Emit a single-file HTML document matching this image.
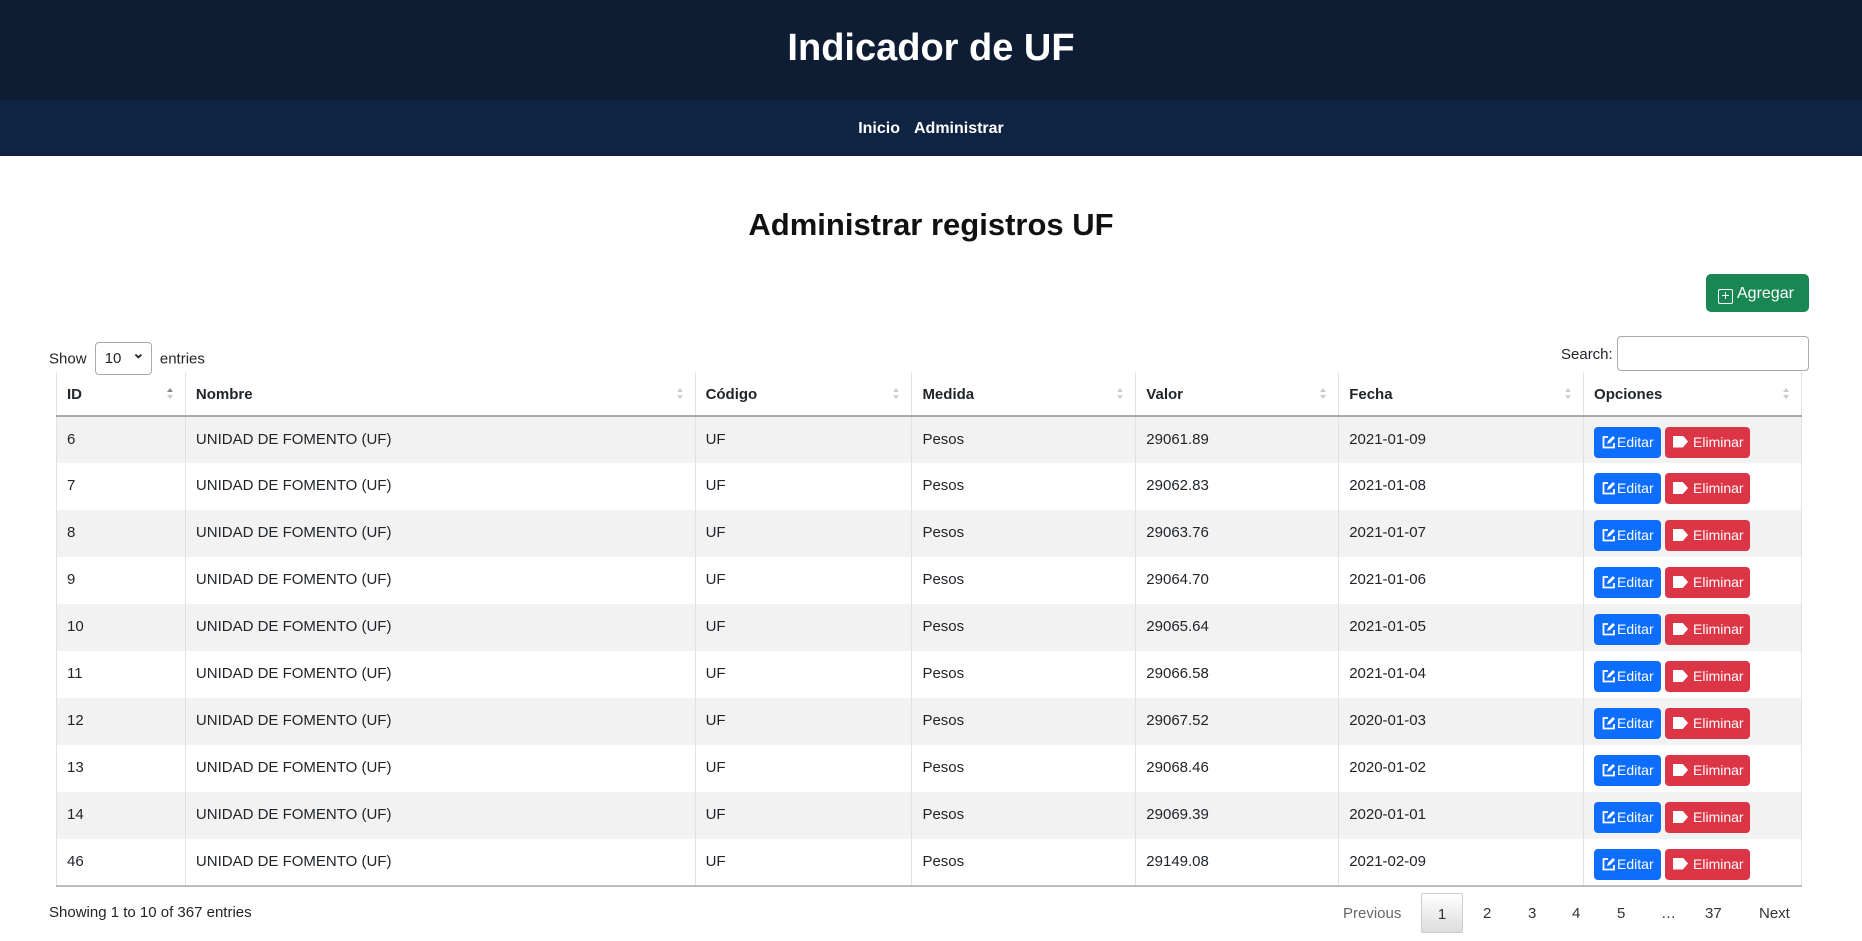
<!DOCTYPE html>
<html><head><meta charset="utf-8"><style>
*{box-sizing:border-box;margin:0;padding:0}
body{width:1862px;height:941px;overflow:hidden;background:#fff;font-family:"Liberation Sans",sans-serif;color:#212529;font-size:15px;position:relative}
.hdr{position:absolute;left:0;top:0;width:1862px;height:100px;background:#0e1c34;color:#fff;text-align:center;font-size:38px;line-height:96px;font-weight:bold}
.nav{position:absolute;left:0;top:100px;width:1862px;height:56px;background:#0f2342;color:#fff;text-align:center;font-weight:bold;font-size:16px;line-height:58px}
.nav span{margin:0 7px}
h2{position:absolute;top:203px;width:1862px;text-align:center;font-size:31px;font-weight:bold;line-height:44px;color:#111}
.add{position:absolute;left:1706px;top:274px;width:103px;height:38px;background:#198754;border-radius:5px;color:#fff;font-size:16px;line-height:40px;padding-left:12px}
.add i{display:inline-block;width:15px;height:15px;border:1.5px solid #fff;border-radius:2px;vertical-align:-2px;margin-right:4px;font-style:normal;font-size:14px;line-height:11px;text-align:center}
.show{position:absolute;left:49px;top:343px;line-height:20px}
.sel{display:inline-block;width:57px;height:33px;border:1px solid #aaa;border-radius:4px;vertical-align:middle;margin:0 4px;padding-left:9px;line-height:31px;position:relative;top:-1px}
.sel:after{content:"⌄";position:absolute;right:6px;top:-5px;font-weight:bold}
.search{position:absolute;left:1561px;top:346px}
.sinp{position:absolute;left:1617px;top:336px;width:192px;height:35px;border:1px solid #aaa;border-radius:4px}
table{position:absolute;left:56px;top:372px;width:1746px;border-collapse:collapse}
th{height:44px;text-align:left;padding-left:10px;padding-top:2px;font-weight:bold;border-bottom:2px solid #aaa;border-left:1px solid #dee2e6;position:relative}
th:after{content:"";position:absolute;right:12px;top:16px;border:3px solid transparent;border-bottom:4px solid #ccc;border-top:0}
th:before{content:"";position:absolute;right:12px;top:23px;border:3px solid transparent;border-top:4px solid #ccc;border-bottom:0}
th.s:after{border-bottom-color:#888}
td{height:47px;padding-left:10px;padding-bottom:2px;border-left:1px solid #dee2e6;vertical-align:middle}
tr:nth-child(odd) td{background:#f2f2f2}
th:last-child,td:last-child{border-right:1px solid #dee2e6}
tbody tr:last-child td{border-bottom:2px solid #bbb}
.b{display:inline-block;height:31px;line-height:31px;color:#fff;border-radius:4px;font-size:14px;vertical-align:middle;position:relative;top:3px}
.e{background:#0d6efd;width:67px;padding-left:8px}
.d{background:#dc3545;width:85px;padding-left:8px;margin-left:4px}
.e svg{vertical-align:-2px;margin-right:1px}
.d i{display:inline-block;width:15px;height:12px;background:#fff;vertical-align:-1px;margin-right:5px;clip-path:polygon(0 0,65% 0,100% 50%,65% 100%,0 100%)}
.foot{position:absolute;left:49px;top:904px}
.pg{position:absolute;top:893px;height:40px;line-height:42px;color:#333}
.cur{border:1px solid #ccc;border-radius:2px;background:linear-gradient(#fff,#ddd);width:42px;text-align:center}
</style></head><body>
<div class="hdr">Indicador de UF</div>
<div class="nav"><span>Inicio</span><span>Administrar</span></div>
<h2>Administrar registros UF</h2>
<div class="add"><i>+</i>Agregar</div>
<div class="show">Show <span class="sel">10</span> entries</div>
<div class="search">Search:</div><div class="sinp"></div>
<table>
<colgroup><col style="width:129px"><col style="width:510px"><col style="width:217px"><col style="width:224px"><col style="width:203px"><col style="width:245px"><col style="width:218px"></colgroup>
<thead><tr><th class="s">ID</th><th>Nombre</th><th>Código</th><th>Medida</th><th>Valor</th><th>Fecha</th><th>Opciones</th></tr></thead>
<tbody>
<tr><td>6</td><td>UNIDAD DE FOMENTO (UF)</td><td>UF</td><td>Pesos</td><td>29061.89</td><td>2021-01-09</td><td><span class="b e"><svg width="14" height="14" viewBox="0 0 14 14"><path d="M6 2H1.5v10.5H12V8" fill="none" stroke="#fff" stroke-width="1.8"/><path d="M5 9l1-3 5-5 2 2-5 5z" fill="#fff"/></svg>Editar</span><span class="b d"><i></i>Eliminar</span></td></tr>
<tr><td>7</td><td>UNIDAD DE FOMENTO (UF)</td><td>UF</td><td>Pesos</td><td>29062.83</td><td>2021-01-08</td><td><span class="b e"><svg width="14" height="14" viewBox="0 0 14 14"><path d="M6 2H1.5v10.5H12V8" fill="none" stroke="#fff" stroke-width="1.8"/><path d="M5 9l1-3 5-5 2 2-5 5z" fill="#fff"/></svg>Editar</span><span class="b d"><i></i>Eliminar</span></td></tr>
<tr><td>8</td><td>UNIDAD DE FOMENTO (UF)</td><td>UF</td><td>Pesos</td><td>29063.76</td><td>2021-01-07</td><td><span class="b e"><svg width="14" height="14" viewBox="0 0 14 14"><path d="M6 2H1.5v10.5H12V8" fill="none" stroke="#fff" stroke-width="1.8"/><path d="M5 9l1-3 5-5 2 2-5 5z" fill="#fff"/></svg>Editar</span><span class="b d"><i></i>Eliminar</span></td></tr>
<tr><td>9</td><td>UNIDAD DE FOMENTO (UF)</td><td>UF</td><td>Pesos</td><td>29064.70</td><td>2021-01-06</td><td><span class="b e"><svg width="14" height="14" viewBox="0 0 14 14"><path d="M6 2H1.5v10.5H12V8" fill="none" stroke="#fff" stroke-width="1.8"/><path d="M5 9l1-3 5-5 2 2-5 5z" fill="#fff"/></svg>Editar</span><span class="b d"><i></i>Eliminar</span></td></tr>
<tr><td>10</td><td>UNIDAD DE FOMENTO (UF)</td><td>UF</td><td>Pesos</td><td>29065.64</td><td>2021-01-05</td><td><span class="b e"><svg width="14" height="14" viewBox="0 0 14 14"><path d="M6 2H1.5v10.5H12V8" fill="none" stroke="#fff" stroke-width="1.8"/><path d="M5 9l1-3 5-5 2 2-5 5z" fill="#fff"/></svg>Editar</span><span class="b d"><i></i>Eliminar</span></td></tr>
<tr><td>11</td><td>UNIDAD DE FOMENTO (UF)</td><td>UF</td><td>Pesos</td><td>29066.58</td><td>2021-01-04</td><td><span class="b e"><svg width="14" height="14" viewBox="0 0 14 14"><path d="M6 2H1.5v10.5H12V8" fill="none" stroke="#fff" stroke-width="1.8"/><path d="M5 9l1-3 5-5 2 2-5 5z" fill="#fff"/></svg>Editar</span><span class="b d"><i></i>Eliminar</span></td></tr>
<tr><td>12</td><td>UNIDAD DE FOMENTO (UF)</td><td>UF</td><td>Pesos</td><td>29067.52</td><td>2020-01-03</td><td><span class="b e"><svg width="14" height="14" viewBox="0 0 14 14"><path d="M6 2H1.5v10.5H12V8" fill="none" stroke="#fff" stroke-width="1.8"/><path d="M5 9l1-3 5-5 2 2-5 5z" fill="#fff"/></svg>Editar</span><span class="b d"><i></i>Eliminar</span></td></tr>
<tr><td>13</td><td>UNIDAD DE FOMENTO (UF)</td><td>UF</td><td>Pesos</td><td>29068.46</td><td>2020-01-02</td><td><span class="b e"><svg width="14" height="14" viewBox="0 0 14 14"><path d="M6 2H1.5v10.5H12V8" fill="none" stroke="#fff" stroke-width="1.8"/><path d="M5 9l1-3 5-5 2 2-5 5z" fill="#fff"/></svg>Editar</span><span class="b d"><i></i>Eliminar</span></td></tr>
<tr><td>14</td><td>UNIDAD DE FOMENTO (UF)</td><td>UF</td><td>Pesos</td><td>29069.39</td><td>2020-01-01</td><td><span class="b e"><svg width="14" height="14" viewBox="0 0 14 14"><path d="M6 2H1.5v10.5H12V8" fill="none" stroke="#fff" stroke-width="1.8"/><path d="M5 9l1-3 5-5 2 2-5 5z" fill="#fff"/></svg>Editar</span><span class="b d"><i></i>Eliminar</span></td></tr>
<tr><td>46</td><td>UNIDAD DE FOMENTO (UF)</td><td>UF</td><td>Pesos</td><td>29149.08</td><td>2021-02-09</td><td><span class="b e"><svg width="14" height="14" viewBox="0 0 14 14"><path d="M6 2H1.5v10.5H12V8" fill="none" stroke="#fff" stroke-width="1.8"/><path d="M5 9l1-3 5-5 2 2-5 5z" fill="#fff"/></svg>Editar</span><span class="b d"><i></i>Eliminar</span></td></tr>
</tbody></table>
<div class="foot">Showing 1 to 10 of 367 entries</div>
<div class="pg" style="left:1343px;color:#666">Previous</div>
<div class="pg cur" style="left:1421px">1</div>
<div class="pg" style="left:1483px">2</div>
<div class="pg" style="left:1528px">3</div>
<div class="pg" style="left:1572px">4</div>
<div class="pg" style="left:1617px">5</div>
<div class="pg" style="left:1661px">…</div>
<div class="pg" style="left:1705px">37</div>
<div class="pg" style="left:1759px">Next</div>
</body></html>
